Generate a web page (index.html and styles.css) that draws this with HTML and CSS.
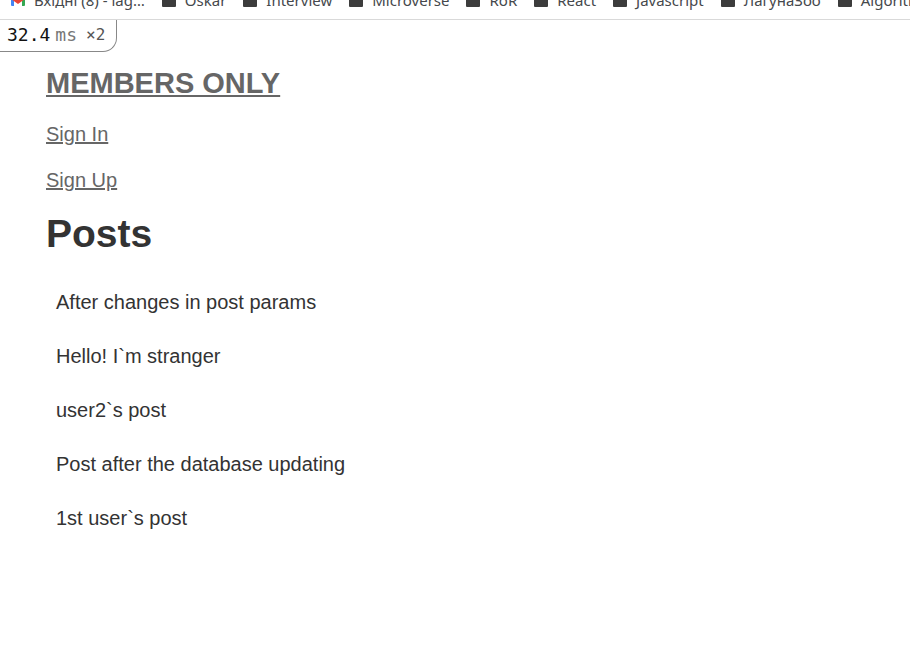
FILE: index.html
```html
<!DOCTYPE html>
<html lang="en">
<head>
<meta charset="utf-8">
<title>Members Only</title>
<link rel="stylesheet" href="styles.css">
</head>
<body>
<nav class="bookmarks" aria-label="Bookmarks">
  <a class="bookmark" href="#"><svg class="icon" viewBox="0 0 14 14" aria-hidden="true"><path fill="#4285f4" d="M0 4h3v9H1a1 1 0 0 1-1-1z"/><path fill="#34a853" d="M11 4h3v8a1 1 0 0 1-1 1h-2z"/><path fill="#ea4335" d="M0 2l7 5 7-5v4l-7 5-7-5z"/></svg><span lang="uk">Вхідні (8) - lag…</span></a>
  <a class="bookmark" href="#"><span class="icon folder"></span>Oskar</a>
  <a class="bookmark" href="#"><span class="icon folder"></span>Interview</a>
  <a class="bookmark" href="#"><span class="icon folder"></span>Microverse</a>
  <a class="bookmark" href="#"><span class="icon folder"></span>RoR</a>
  <a class="bookmark" href="#"><span class="icon folder"></span>React</a>
  <a class="bookmark" href="#"><span class="icon folder"></span>Javascript</a>
  <a class="bookmark" href="#"><span class="icon folder"></span><span lang="uk">ЛагунаЗоо</span></a>
  <a class="bookmark" href="#"><span class="icon folder"></span>Algorithms</a>
</nav>
<div class="page">
  <div class="profiler"><span class="time">32.4</span><span class="unit">ms</span><span class="count">×2</span></div>
  <header class="site-header">
    <h2 class="brand"><a href="#">MEMBERS ONLY</a></h2>
    <p class="auth"><a href="#">Sign In</a></p>
    <p class="auth"><a href="#">Sign Up</a></p>
  </header>
  <main>
    <h1 class="title">Posts</h1>
    <ul class="posts">
      <li>After changes in post params</li>
      <li>Hello! I`m stranger</li>
      <li>user2`s post</li>
      <li>Post after the database updating</li>
      <li>1st user`s post</li>
    </ul>
  </main>
</div>
</body>
</html>
```
FILE: styles.css
```css
* {
  box-sizing: border-box;
}

body {
  margin: 0;
  background: #fff;
  color: #333;
  font: 20px/26px "Liberation Sans", Arial, sans-serif;
}

a {
  color: #666;
}

.bookmarks {
  display: flex;
  align-items: flex-start;
  gap: 17px;
  height: 20px;
  padding-left: 11px;
  overflow: hidden;
  border-bottom: 1px solid #d9d9d9;
}

.bookmark {
  display: flex;
  flex: none;
  align-items: center;
  gap: 9px;
  height: 20px;
  margin-top: -10px;
  color: #45484c;
  font: 15px/20px "Noto Sans", "Open Sans", sans-serif;
  text-decoration: none;
  white-space: nowrap;
}

.icon {
  width: 14px;
  height: 14px;
}

.folder {
  height: 14px;
  border-radius: 1px;
  background: #3c3c3c;
}

.page {
  position: relative;
  padding: 45px 46px;
}

.profiler {
  position: absolute;
  top: 0;
  left: 0;
  display: flex;
  align-items: center;
  height: 32px;
  padding: 0 11px 2px 7px;
  border: 1px solid #888;
  border-width: 0 1px 1px 0;
  border-bottom-right-radius: 14px;
  background: #fff;
  font: 18px/30px "DejaVu Sans Mono", monospace;
}

.time {
  color: #111;
}

.unit {
  margin-left: 5px;
  color: #777;
}

.count {
  margin-left: 9px;
  color: #555;
  font-size: 16px;
}

.brand {
  margin: 0 0 20px;
  font-size: 29px;
  line-height: 36px;
}

.auth {
  margin: 0 0 20px;
}

.title {
  margin: 0 0 20px;
  font-size: 39px;
  line-height: 42px;
}

.posts {
  margin: 0;
  padding: 0 10px;
  list-style: none;
}

.posts li {
  padding: 14px 0;
}
```
